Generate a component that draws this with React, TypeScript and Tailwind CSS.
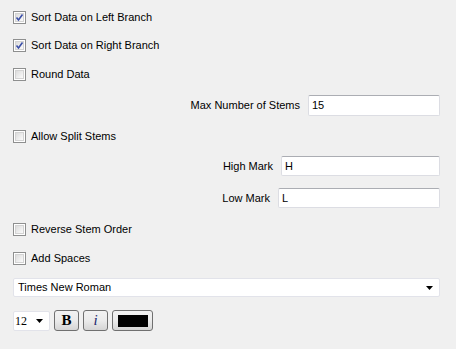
import React from 'react';

const font = "font-['Liberation_Sans',Arial,sans-serif] text-[11px] text-black";

function Check({ checked }: { checked?: boolean }) {
  return (
    <div className="relative w-[13px] h-[13px] border border-[#8e8f8f] bg-white shrink-0">
      <div className="absolute inset-[1px] border border-[#d3d3d3] bg-gradient-to-br from-[#dcdcdc] to-[#fbfbfb]" />
      {checked && (
        <svg className="absolute inset-0" width="11" height="11" viewBox="0 0 11 11">
          <path d="M2.5 5.5 L4.5 8 L8.5 2.5" fill="none" stroke="#3b4fa8" strokeWidth="1.6" />
        </svg>
      )}
    </div>
  );
}

function CheckRow({ label, checked, className }: { label: string; checked?: boolean; className: string }) {
  return (
    <div className={`flex items-center gap-[5px] ${className}`}>
      <Check checked={checked} />
      <span>{label}</span>
    </div>
  );
}

function TextBox({ value, className }: { value: string; className: string }) {
  return (
    <div className={`flex items-center bg-white border border-[#dcdde3] border-t-[#abadb3] rounded-[2px] pl-[3px] ${className}`}>
      {value}
    </div>
  );
}

function Arrow() {
  return (
    <svg width="8" height="4" viewBox="0 0 8 4">
      <path d="M0 0 H7 L3.5 4 Z" fill="#000" />
    </svg>
  );
}

function Button({ children, className }: { children: React.ReactNode; className: string }) {
  return (
    <div className={`flex items-center justify-center h-[21px] border border-[#707070] rounded-[3px] bg-gradient-to-b from-[#f2f2f2] via-[#ebebeb] to-[#d5d5d5] ${className}`}>
      {children}
    </div>
  );
}

export default function App() {
  return (
    <div className={`w-[456px] h-[349px] bg-[#f0f0f0] pt-[3px] pl-[13px] ${font}`}>
      <CheckRow className="h-[28px]" label="Sort Data on Left Branch" checked />
      <CheckRow className="h-[29px]" label="Sort Data on Right Branch" checked />
      <CheckRow className="h-[28px]" label="Round Data" />

      <div className="flex items-center justify-end h-[21px] mt-[7px] pr-[16px] gap-[8px]">
        <span>Max Number of Stems</span>
        <TextBox className="w-[132px] h-[21px]" value="15" />
      </div>

      <CheckRow className="h-[40px]" label="Allow Split Stems" />

      <div className="flex items-center justify-end h-[20px] pr-[16px] gap-[8px]">
        <span>High Mark</span>
        <TextBox className="w-[159px] h-[20px]" value="H" />
      </div>
      <div className="flex items-center justify-end h-[20px] mt-[12px] pr-[16px] gap-[8px]">
        <span>Low Mark</span>
        <TextBox className="w-[162px] h-[20px]" value="L" />
      </div>

      <CheckRow className="h-[14px] mt-[14px]" label="Reverse Stem Order" />
      <CheckRow className="h-[14px] mt-[15px]" label="Add Spaces" />

      <div className="flex items-center justify-between w-[427px] h-[19px] mt-[13px] bg-white border border-[#e2e3ea] rounded-[2px] pl-[4px] pr-[5px]">
        <span>Times New Roman</span>
        <Arrow />
      </div>

      <div className="flex items-center h-[21px] mt-[13px]">
        <div className="flex items-center justify-between w-[37px] h-[20px] bg-white border border-[#e2e3ea] rounded-[2px] pl-[1px] pr-[5px] font-['Liberation_Serif',serif] text-[12px]">
          <span>12</span>
          <Arrow />
        </div>
        <Button className="w-[25px] ml-[4px]">
          <span className="font-['Liberation_Serif',serif] font-bold text-[15px] leading-none">B</span>
        </Button>
        <Button className="w-[25px] ml-[4px]">
          <span className="font-['Liberation_Serif',serif] italic text-[15px] leading-none text-[#1c2a6e]">i</span>
        </Button>
        <Button className="w-[41px] ml-[4px]">
          <div className="w-[30px] h-[12px] bg-black" />
        </Button>
      </div>
    </div>
  );
}
